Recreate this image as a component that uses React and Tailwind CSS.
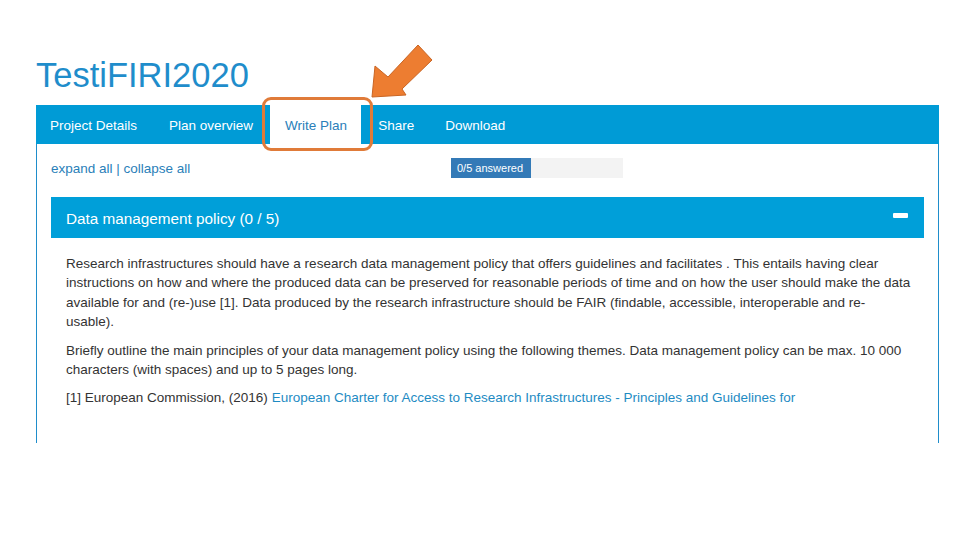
import React from "react";

export default function App() {
  const font = { fontFamily: '"Liberation Sans", Arial, sans-serif' };
  return (
    <div className="relative w-[960px] h-[540px] bg-white overflow-hidden" style={font}>
      <div className="pl-[36px] pt-[55px]">
        <h1 className="text-[34.5px] leading-[40px] text-[#1f8dcb] font-normal">TestiFIRI2020</h1>
        <div className="mt-[10px] w-[903px]">
          <nav className="flex h-[39px] bg-[#009bd6] text-[13.5px] text-white">
            <div className="flex items-center pt-[3px] pl-[14px] pr-[16px]">Project Details</div>
            <div className="flex items-center pt-[3px] pl-[16px] pr-[17px]">Plan overview</div>
            <div className="flex items-center pt-[3px] pl-[15px] pr-[14px] bg-white text-[#2a80b9]">Write Plan</div>
            <div className="flex items-center pt-[3px] pl-[17px] pr-[15px]">Share</div>
            <div className="flex items-center pt-[3px] px-[16px]">Download</div>
          </nav>
          <div className="h-[299px] border-x border-[#1f8dcb] px-[14px] pt-[14px] overflow-hidden">
            <div className="flex items-center h-[20px]">
              <div className="w-[400px] pt-[2px] text-[13.5px] text-[#2a80b9]">expand all | collapse all</div>
              <div className="flex w-[172px] h-[20px] bg-[#f3f3f3]">
                <div className="w-[80px] h-full bg-[#337ab7] text-white text-[11px] flex items-center pl-[6px]">0/5 answered</div>
              </div>
            </div>
            <div className="mt-[19px]">
              <div className="flex items-center justify-between h-[41px] bg-[#009fd9] pl-[15px] pr-[16px]">
                <span className="text-[15.3px] text-white pt-[3px]">Data management policy (0 / 5)</span>
                <span className="block w-[15px] h-[5px] bg-white rounded-[1px] -mt-[4px]"></span>
              </div>
              <div className="pt-[16px] pl-[15px] pr-[10px] text-[13.5px] leading-[19.4px] text-[#333333] whitespace-nowrap">
                <p>
                  Research infrastructures should have a research data management policy that offers guidelines and facilitates . This entails having clear
                  <br />
                  instructions on how and where the produced data can be preserved for reasonable periods of time and on how the user should make the data
                  <br />
                  available for and (re-)use [1]. Data produced by the research infrastructure should be FAIR (findable, accessible, interoperable and re-
                  <br />
                  usable).
                </p>
                <p className="mt-[9px]">
                  Briefly outline the main principles of your data management policy using the following themes. Data management policy can be max. 10 000
                  <br />
                  characters (with spaces) and up to 5 pages long.
                </p>
                <p className="mt-[9px]">
                  [1] European Commission, (2016){" "}
                  <span className="text-[#1e8bc3]">European Charter for Access to Research Infrastructures - Principles and Guidelines for</span>
                </p>
              </div>
            </div>
          </div>
        </div>
      </div>

      <div className="absolute left-[262px] top-[97px] w-[111px] h-[54px] border-[3px] border-[#e07b39] rounded-[9px]"></div>

      <svg className="absolute left-0 top-0" width="960" height="540" viewBox="0 0 960 540">
        <polygon
          points="372,97 375,66 388,77 418,45 432,60 402,89 406,95"
          fill="#ed7d31"
          stroke="#c96524"
          strokeWidth="1"
          strokeLinejoin="miter"
        />
      </svg>
    </div>
  );
}
